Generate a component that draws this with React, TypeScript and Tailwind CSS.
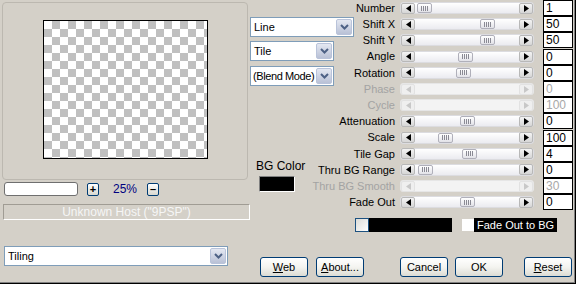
import React from 'react';

// Диалог фильтра в стиле Windows XP

interface Row {
  label: string;
  value: string;
  thumb?: number; // отступ ползунка от левого края
  disabled?: boolean;
}

const rows: Row[] = [
  { label: 'Number', value: '1', thumb: 17 },
  { label: 'Shift X', value: '50', thumb: 80 },
  { label: 'Shift Y', value: '50', thumb: 80 },
  { label: 'Angle', value: '0', thumb: 58 },
  { label: 'Rotation', value: '0', thumb: 56 },
  { label: 'Phase', value: '0', disabled: true },
  { label: 'Cycle', value: '100', disabled: true },
  { label: 'Attenuation', value: '0', thumb: 60 },
  { label: 'Scale', value: '100', thumb: 38 },
  { label: 'Tile Gap', value: '4', thumb: 62 },
  { label: 'Thru BG Range', value: '0', thumb: 18 },
  { label: 'Thru BG Smooth', value: '30', disabled: true },
  { label: 'Fade Out', value: '0', thumb: 60 },
];

const Chevron = () => (
  <svg width="9" height="6" viewBox="0 0 9 6">
    <polyline points="1,1 4.5,4.5 8,1" fill="none" stroke="#4d6185" strokeWidth="2" />
  </svg>
);

const Select = ({ value, className, textClass = '' }: { value: string; className: string; textClass?: string }) => (
  <div className={`flex h-[20px] border border-[#7f9db9] bg-white ${className}`}>
    <span className={`flex-1 overflow-hidden whitespace-nowrap pl-[3px] text-[11px] leading-[18px] ${textClass}`}>{value}</span>
    <span className="m-px flex w-[16px] shrink-0 items-center justify-center rounded-[2px] border border-[#b9c3da] bg-gradient-to-b from-[#e4e8f2] to-[#b9c1d6]">
      <Chevron />
    </span>
  </div>
);

const Arrow = ({ dir, disabled }: { dir: 'left' | 'right'; disabled?: boolean }) => (
  <span
    className={`flex h-[11px] w-[14px] items-center justify-center rounded-[2px] border ${
      disabled ? 'border-[#e2e2e2] bg-[#efefef]' : 'border-[#b8b8b8] bg-gradient-to-b from-[#f4f4f4] to-[#d6d6d6]'
    }`}
  >
    <svg width="5" height="7" viewBox="0 0 5 7">
      {dir === 'left' ? (
        <polygon points="5,0 0,3.5 5,7" fill={disabled ? '#c8c8c8' : '#000'} />
      ) : (
        <polygon points="0,0 5,3.5 0,7" fill={disabled ? '#c8c8c8' : '#000'} />
      )}
    </svg>
  </span>
);

const Slider = ({ thumb, disabled }: { thumb?: number; disabled?: boolean }) => (
  <div
    className={`relative flex h-[12px] w-[134px] items-center justify-between rounded-[3px] border ${
      disabled ? 'border-[#e6e6e6] bg-[#f3f3f3]' : 'border-[#dcdce0] bg-gradient-to-b from-white to-[#ebebf0]'
    }`}
  >
    <Arrow dir="left" disabled={disabled} />
    <Arrow dir="right" disabled={disabled} />
    {thumb !== undefined && (
      <span
        className="absolute top-0 flex h-[10px] w-[15px] items-center justify-center gap-px rounded-[2px] border border-[#b0b0ba] bg-gradient-to-b from-white to-[#e2e2e8]"
        style={{ left: thumb - 1 }}
      >
        <i className="h-[5px] w-px bg-[#8a8a94]" />
        <i className="h-[5px] w-px bg-[#8a8a94]" />
        <i className="h-[5px] w-px bg-[#8a8a94]" />
        <i className="h-[5px] w-px bg-[#8a8a94]" />
      </span>
    )}
  </div>
);

const XpButton = ({ children, className = '' }: { children: React.ReactNode; className?: string }) => (
  <button
    className={`h-[20px] w-[48px] rounded-[3px] border border-[#003c74] bg-gradient-to-b from-white via-[#f4f4f0] to-[#dcdcd4] text-[11px] leading-[18px] ${className}`}
  >
    {children}
  </button>
);

const SmallBtn = ({ children }: { children: React.ReactNode }) => (
  <span className="flex h-[13px] w-[12px] items-center justify-center rounded-[2px] border border-[#003c74] bg-gradient-to-b from-white to-[#d8d8d0] text-[11px] font-bold leading-none">
    {children}
  </span>
);

export default function App() {
  return (
    <div className="flex h-[284px] w-[576px] overflow-hidden bg-[#d4d0c8] font-['Liberation_Sans',Arial,sans-serif] text-[11px] text-black shadow-[inset_-1px_-1px_0_#000,inset_-2px_-2px_0_#808080]">
      {/* Левая колонка: превью */}
      <div className="flex w-[250px] flex-col">
        <div className="ml-[2px] mt-[2px] flex h-[178px] w-[246px] justify-center rounded-[4px] border border-[#bcb8b0] pt-[17px]">
          <div className="h-[139px] w-[165px] border border-black bg-[image:conic-gradient(#c0c0c0_25%,#fff_0_50%,#c0c0c0_0_75%,#fff_0)] bg-[length:16px_16px]" />
        </div>
        <div className="ml-[4px] mt-[2px] flex h-[14px] items-center">
          <span className="h-[14px] w-[74px] rounded-[3px] border border-[#6f6f6f] bg-white" />
          <span className="ml-[9px]"><SmallBtn>+</SmallBtn></span>
          <span className="ml-[14px] w-[34px] text-[12px] text-[#000080]">25%</span>
          <SmallBtn>–</SmallBtn>
        </div>
        <div className="ml-[3px] mt-[8px] h-[16px] w-[247px] border border-b-white border-l-[#a09c94] border-r-white border-t-[#a09c94] text-center text-[12px] leading-[14px] text-[#f6f6f6]">
          Unknown Host ("9PSP")
        </div>
        <Select value="Tiling" className="ml-[4px] mt-[26px] w-[224px]" />
      </div>

      {/* Правая часть */}
      <div className="flex flex-1 flex-col">
        <div className="flex">
          <div className="flex w-[105px] flex-col">
            <Select value="Line" className="mt-[17px] w-[104px]" />
            <Select value="Tile" className="mt-[4px] w-[84px]" />
            <Select value="(Blend Mode)" className="mt-[5px] w-[84px]" textClass="!pl-[2px] tracking-[-0.4px]" />
            <span className="ml-[6px] mt-[73px] text-[12px] leading-[14px]">BG Color</span>
            <span className="ml-[9px] mt-[3px] h-[16px] w-[36px] border border-b-white border-l-[#808080] border-r-white border-t-[#808080] bg-black" />
          </div>
          <div className="flex w-[221px] flex-col">
            {rows.map((r) => (
              <div key={r.label} className="flex h-[16.2px] items-center">
                <span
                  className={`flex w-[40px] justify-end whitespace-nowrap text-[11px] ${
                    r.disabled ? 'text-[#a3a3a3]' : 'text-black'
                  }`}
                >
                  {r.label}
                </span>
                <span className="ml-[5px]">
                  <Slider thumb={r.thumb} disabled={r.disabled} />
                </span>
                <span
                  className={`ml-[9px] h-[16px] w-[30px] border border-black bg-white pl-[2px] text-[12px] leading-[14px] ${
                    r.disabled ? 'text-[#a8a8a8]' : 'text-black'
                  }`}
                >
                  {r.value}
                </span>
              </div>
            ))}
          </div>
        </div>

        {/* Fade Out to BG */}
        <div className="ml-[105px] mt-[8px] flex h-[14px] items-center">
          <span className="h-[14px] w-[14px] border border-[#1c5180] bg-gradient-to-br from-[#dcdcd8] to-white" />
          <span className="h-[14px] w-[83px] bg-black" />
          <span className="ml-[10px] h-[12px] w-[12px] bg-white" />
          <span className="h-[14px] w-[83px] whitespace-nowrap bg-black pl-[3px] text-[11px] leading-[14px] text-white">Fade Out to BG</span>
        </div>

        {/* Кнопки */}
        <div className="mt-[25px] flex items-center pl-[10px]">
          <XpButton><u>W</u>eb</XpButton>
          <XpButton className="ml-[8px]"><u>A</u>bout...</XpButton>
          <XpButton className="ml-[36px]">Cancel</XpButton>
          <XpButton className="ml-[7px]">OK</XpButton>
          <XpButton className="ml-[21px]"><u>R</u>eset</XpButton>
        </div>
      </div>
    </div>
  );
}
